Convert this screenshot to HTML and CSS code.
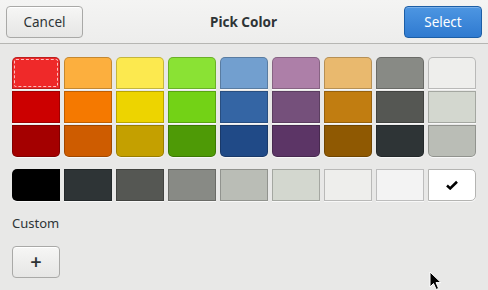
FILE: index.html
```html
<!DOCTYPE html>
<html>
<head>
    <meta charset="UTF-8">
    <title>Pick Color</title>
    <link rel="stylesheet" href="styles.css">
</head>
<body>
    <div class="dialog">
        <div class="headerbar">
            <button class="btn">Cancel</button>
            <div class="title">Pick Color</div>
            <button class="btn btn-blue">Select</button>
        </div>
        <div class="content">
            <div class="palette">
                <div class="column">
                    <div class="swatch selected" style="background:#ef2929"></div>
                    <div class="swatch" style="background:#cc0000"></div>
                    <div class="swatch" style="background:#a40000"></div>
                </div>
                <div class="column">
                    <div class="swatch" style="background:#fcaf3e"></div>
                    <div class="swatch" style="background:#f57900"></div>
                    <div class="swatch" style="background:#ce5c00"></div>
                </div>
                <div class="column">
                    <div class="swatch" style="background:#fce94f"></div>
                    <div class="swatch" style="background:#edd400"></div>
                    <div class="swatch" style="background:#c4a000"></div>
                </div>
                <div class="column">
                    <div class="swatch" style="background:#8ae234"></div>
                    <div class="swatch" style="background:#73d216"></div>
                    <div class="swatch" style="background:#4e9a06"></div>
                </div>
                <div class="column">
                    <div class="swatch" style="background:#729fcf"></div>
                    <div class="swatch" style="background:#3465a4"></div>
                    <div class="swatch" style="background:#204a87"></div>
                </div>
                <div class="column">
                    <div class="swatch" style="background:#ad7fa8"></div>
                    <div class="swatch" style="background:#75507b"></div>
                    <div class="swatch" style="background:#5c3566"></div>
                </div>
                <div class="column">
                    <div class="swatch" style="background:#e9b96e"></div>
                    <div class="swatch" style="background:#c17d11"></div>
                    <div class="swatch" style="background:#8f5902"></div>
                </div>
                <div class="column">
                    <div class="swatch" style="background:#888a85"></div>
                    <div class="swatch" style="background:#555753"></div>
                    <div class="swatch" style="background:#2e3436"></div>
                </div>
                <div class="column">
                    <div class="swatch" style="background:#eeeeec"></div>
                    <div class="swatch" style="background:#d3d7cf"></div>
                    <div class="swatch" style="background:#babdb6"></div>
                </div>
            </div>
            <div class="greys">
                <div class="swatch" style="background:#000000"></div>
                <div class="swatch" style="background:#2e3436"></div>
                <div class="swatch" style="background:#555753"></div>
                <div class="swatch" style="background:#888a85"></div>
                <div class="swatch" style="background:#babdb6"></div>
                <div class="swatch" style="background:#d3d7cf"></div>
                <div class="swatch" style="background:#eeeeec"></div>
                <div class="swatch" style="background:#f3f3f3"></div>
                <div class="swatch white" style="background:#ffffff">
                    <svg width="12" height="10" viewBox="0 0 12 10"><path d="M1 5.5 L4.2 8.4 L11 1.8" fill="none" stroke="#000" stroke-width="2.6"/></svg>
                </div>
            </div>
            <div class="label">Custom</div>
            <button class="btn btn-add">+</button>
        </div>
        <svg class="pointer" width="14" height="20" viewBox="0 0 14 20">
            <path d="M1 1 L1 16 L4.5 12.5 L7.2 18.5 L9.6 17.4 L7 11.6 L12 11.6 Z" fill="#000" stroke="#fff" stroke-width="1"/>
        </svg>
    </div>
</body>
</html>
```
FILE: styles.css
```css
body {
    margin: 0;
    font-family: "Noto Sans", "DejaVu Sans", sans-serif;
    font-size: 13px;
    color: #2e3436;
    background: #e8e8e7;
}
.dialog {
    width: 488px;
    height: 290px;
    position: relative;
    overflow: hidden;
}
.headerbar {
    height: 44px;
    box-sizing: border-box;
    padding: 6px;
    display: flex;
    align-items: center;
    justify-content: space-between;
    background: linear-gradient(#f4f4f3, #ededec);
    border-bottom: 1px solid #b6b6b3;
}
.title {
    font-weight: bold;
    font-size: 13.5px;
    color: #2e3436;
}
.btn {
    height: 32px;
    box-sizing: border-box;
    font-family: inherit;
    font-size: 13.5px;
    color: #2e3436;
    border: 1px solid #a9a9a7;
    border-radius: 4px;
    background: linear-gradient(#f6f6f5, #e6e6e5);
    box-shadow: inset 0 1px #fff;
    padding: 0;
}
.headerbar .btn { width: 77px; }
.btn-blue {
    width: 78px !important;
    color: #fff;
    border-color: #1c5ea6;
    background: linear-gradient(#4d96e2, #2f7ad0);
    box-shadow: inset 0 1px rgba(255,255,255,0.25);
}
.content {
    padding: 13px 12px 0 12px;
}
.palette {
    display: flex;
    gap: 4px;
}
.column {
    display: flex;
    flex-direction: column;
    gap: 2px;
}
.swatch {
    width: 48px;
    height: 32px;
    box-sizing: border-box;
    border: 1px solid rgba(0,0,0,0.22);
    box-shadow: 0 1px #f8f8f8;
    display: flex;
    align-items: center;
    justify-content: center;
}
.column .swatch:first-child { border-radius: 5px 5px 0 0; }
.column .swatch:last-child { border-radius: 0 0 5px 5px; }
.selected { position: relative; }
.selected::after {
    content: "";
    position: absolute;
    left: 1px; top: 1px; right: 1px; bottom: 1px;
    border: 1px dashed rgba(255,255,255,0.7);
    border-radius: 2px;
}
.greys {
    display: flex;
    gap: 4px;
    margin-top: 12px;
}
.greys .swatch:first-child { border-radius: 5px 0 0 5px; }
.greys .swatch:last-child { border-radius: 0 5px 5px 0; }
.white { border-color: #b4b4b2; }
.label {
    margin-top: 13px;
    height: 18px;
    line-height: 18px;
}
.btn-add {
    margin-top: 14px;
    width: 48px;
    font-size: 20px;
    font-weight: 600;
    line-height: 1;
}
.pointer {
    position: absolute;
    left: 429px;
    top: 271px;
}
```
